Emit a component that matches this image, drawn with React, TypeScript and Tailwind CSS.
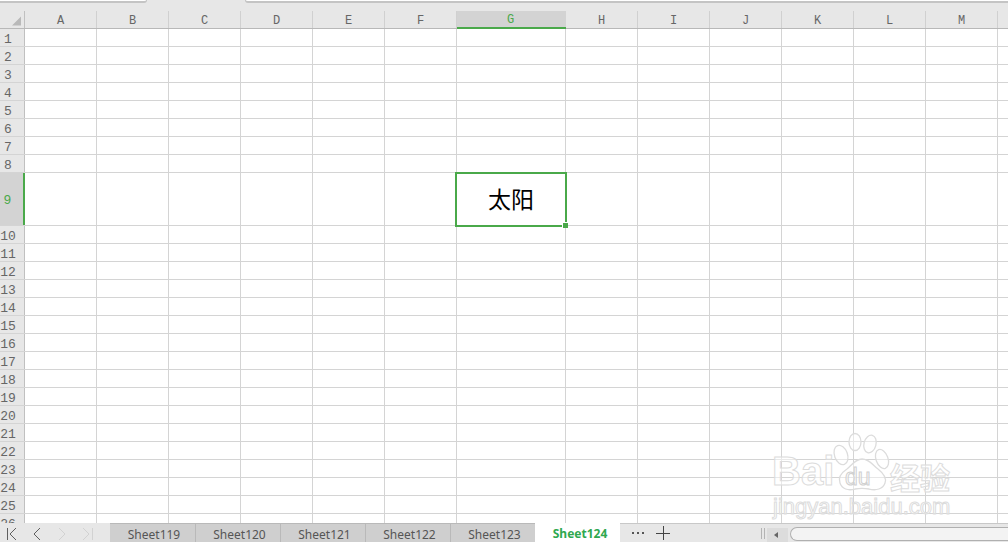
const cols = [
  { n: "A", w: 72 }, { n: "B", w: 72 }, { n: "C", w: 72 }, { n: "D", w: 72 }, { n: "E", w: 72 }, { n: "F", w: 72 },
  { n: "G", w: 109 }, { n: "H", w: 72 }, { n: "I", w: 72 }, { n: "J", w: 72 }, { n: "K", w: 72 }, { n: "L", w: 72 }, { n: "M", w: 72 }, { n: "", w: 72 },
];
const rows = Array.from({ length: 26 }, (_, i) => i + 1);

function Watermark() {
  return (
    <div className="absolute left-[772px] top-[432px] w-[190px] h-[90px] pointer-events-none select-none [font-family:'Liberation_Sans',sans-serif]">
      <svg className="absolute left-0 top-0" width="190" height="70" viewBox="0 0 190 70" fill="#ffffff" fillOpacity="0.45" stroke="#dcdcdc" strokeWidth="1.3">
        <ellipse cx="69" cy="23" rx="6.5" ry="10" transform="rotate(-20 69 23)" />
        <ellipse cx="83" cy="10" rx="6" ry="8.5" />
        <ellipse cx="98" cy="12" rx="6" ry="9" transform="rotate(15 98 12)" />
        <ellipse cx="110" cy="27" rx="6" ry="10" transform="rotate(-20 110 27)" />
        <path d="M90 27c-7 0-11 7-15 10-6 4-9 9-7 14 2 6 8 8 15 6 5-1 9-1 14 0 7 2 14 0 16-6 2-5-2-10-7-14-5-3-8-10-16-10z" />
      </svg>
      <span className="absolute left-0 top-[9px] text-[40px] leading-[60px] font-bold text-[#ffffff80] [-webkit-text-stroke:1px_#dcdcdc]">Bai</span>
      <span className="absolute left-[73px] top-[30px] text-[23px] leading-[30px] text-[#ffffff80] [-webkit-text-stroke:1px_#d0d0d0]">du</span>
      <span className="absolute left-[118px] top-[26px] text-[30px] leading-[36px] font-bold text-[#ffffff80] [-webkit-text-stroke:1px_#dcdcdc] [font-family:'Noto_Sans_CJK_SC',sans-serif]">经验</span>
      <span className="absolute left-[1px] top-[63px] text-[22px] leading-[24px] text-[#ffffff80] [-webkit-text-stroke:1px_#dcdcdc]">jingyan.baidu.com</span>
    </div>
  );
}

function Nav({ d, light }: { d: string; light?: boolean }) {
  return (
    <svg width="25" height="19" viewBox="0 0 25 19" fill="none" stroke={light ? "#d2d2d2" : "#5f5f5f"} strokeWidth="1">
      <path d={d} />
    </svg>
  );
}

export default function App() {
  return (
    <div className="relative w-[1008px] h-[542px] overflow-hidden flex flex-col bg-white [font-family:'Liberation_Mono',monospace]">
      <div className="h-[3px] flex bg-[#e7e7e7] shrink-0">
        <div className="w-[147px] h-[3px] bg-white border-b-2 border-r border-[#c4c4c4] rounded-br-[3px]" />
        <div className="w-[98px]" />
        <div className="flex-1 h-[3px] bg-white border-b-2 border-l border-[#c4c4c4] rounded-bl-[3px]" />
      </div>
      <div className="h-[26px] shrink-0 flex items-end bg-[#e7e7e7] border-b border-[#b8b8b8]">
        <div className="relative w-[25px] shrink-0 border-r border-[#c0c0c0] h-[17px]">
          <svg className="absolute left-[12px] top-[5px]" width="10" height="10"><path d="M0 9.5L9 0.5V9.5Z" fill="#b9b9b9" /></svg>
        </div>
        {cols.map((c, i) =>
          c.n === "G" ? (
            <div key={i} style={{ width: c.w }} className="shrink-0 h-[18px] mb-[-1px] pt-[2px] pr-[2px] flex items-center justify-center bg-[#d3d3d3] border-b-2 border-[#4aa94a] text-[12px] text-[#4aa94a]">
              {c.n}
            </div>
          ) : (
            <div key={i} style={{ width: c.w }} className="shrink-0 h-[17px] pt-[3px] flex items-center justify-center border-r border-[#d0d0d0] text-[12px] text-[#666666]">
              {c.n}
            </div>
          )
        )}
      </div>
      <div className="flex-1 min-h-0 overflow-hidden">
        {rows.map((r) => (
          <div key={r} className={`flex shrink-0 border-b border-[#d4d4d4] ${r === 9 ? "h-[53px]" : "h-[18px]"}`}>
            {r === 9 ? (
              <div className="w-[25px] shrink-0 pt-[4px] pr-[8px] flex items-center justify-center bg-[#d3d3d3] border-r-2 border-[#4aa94a] text-[13px] text-[#4aa94a]">{r}</div>
            ) : (
              <div className="w-[25px] shrink-0 pt-[3px] pr-[8px] flex items-center justify-center bg-[#e7e7e7] border-r border-[#c0c0c0] text-[13px] leading-[17px] text-[#666666]">{r}</div>
            )}
            {cols.map((c, i) => (
              <div key={i} style={{ width: c.w }} className="shrink-0 border-r border-[#d4d4d4]" />
            ))}
          </div>
        ))}
      </div>
      <div className="h-[19px] shrink-0 flex items-stretch bg-[#e7e7e7] [font-family:'Noto_Sans',sans-serif] text-[12px] text-[#555555]">
        <div className="w-[110px] shrink-0 flex">
          <Nav d="M7.5 5V17M16 5L10 11L16 17" />
          <Nav d="M15 5L9 11L15 17" />
          <Nav light d="M9 5L15 11L9 17" />
          <Nav light d="M8 5L14 11L8 17M17.5 5V17" />
        </div>
        {["Sheet119", "Sheet120", "Sheet121", "Sheet122", "Sheet123"].map((s, i) => (
          <div key={s} className={`w-[85px] shrink-0 flex items-center justify-center bg-[#cfcfcf] border-t border-[#b9b9b9] pt-[3px] pl-[3px] ${i > 0 ? "border-l" : ""}`}>
            {s}
          </div>
        ))}
        <div className="w-[85px] shrink-0 flex items-center justify-center bg-white font-bold text-[#2fa84f] pt-[3px] pl-[5px]">Sheet124</div>
        <div className="flex-1 flex items-center border-t border-[#c8c8c8]">
          <span className="ml-[12px] flex gap-[3px]">
            <i className="w-[2px] h-[2px] bg-[#555555]" />
            <i className="w-[2px] h-[2px] bg-[#555555]" />
            <i className="w-[2px] h-[2px] bg-[#555555]" />
          </span>
          <svg className="ml-[12px]" width="14" height="14" viewBox="0 0 14 14" stroke="#444444" strokeWidth="1">
            <path d="M0 7.5H14M7.5 0V14" />
          </svg>
          <span className="ml-[91px] w-[4px] h-[11px] border-x border-[#b4b4b4]" />
          <span className="ml-[2px] mt-[4px] w-[21px] h-[14px] bg-[#dcdcdc] flex items-center justify-center pr-[3px]">
            <span className="w-0 h-0 border-y-[3px] border-r-[4px] border-y-transparent border-r-[#666666]" />
          </span>
          <span className="ml-[2px] mt-[1px] flex-1 h-[14px] bg-[#f3f3f3] border border-r-0 border-[#b0b0b0] rounded-l-[8px]" />
        </div>
      </div>
      <div className="absolute left-[455px] top-[172px] w-[112px] h-[55px] pb-[2px] border-2 border-[#4aa94a] flex items-center justify-center text-[23px] text-black [font-family:'Noto_Sans_CJK_SC',sans-serif]">
        太阳
        <span className="absolute right-[-3px] bottom-[-3px] w-[5px] h-[5px] bg-[#4aa94a] border-l border-t border-white box-content" />
      </div>
      <Watermark />
    </div>
  );
}
